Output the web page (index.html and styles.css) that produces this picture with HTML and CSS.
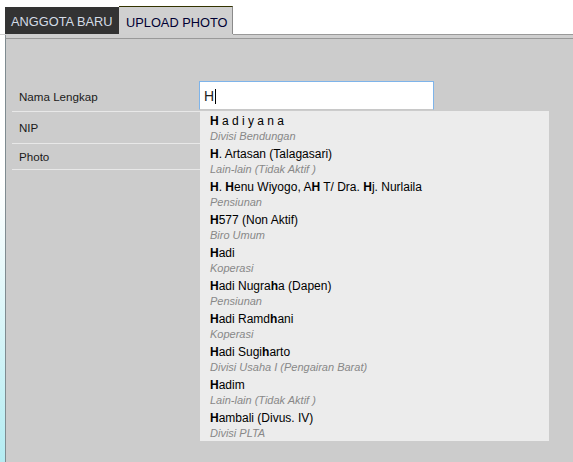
FILE: index.html
```html
<!DOCTYPE html>
<html>
<head>
<meta charset="utf-8">
<link rel="stylesheet" href="styles.css">
</head>
<body>
<div class="app">
  <div class="tabbar">
    <div class="tab tab-dark">ANGGOTA BARU</div>
    <div class="tab tab-active">UPLOAD PHOTO</div>
    <div class="tab-fill"></div>
  </div>
  <div class="band"></div>
  <div class="panel">
    <div class="form">
      <div class="row row-name">
        <div class="label">Nama Lengkap</div>
        <div class="field"><div class="input"><span class="input-text">H</span><span class="caret"></span></div></div>
      </div>
      <div class="row row-nip">
        <div class="label">NIP</div>
      </div>
      <div class="row row-photo">
        <div class="label">Photo</div>
      </div>
    </div>
    <ul class="suggest">
      <li><div class="name"><b>H</b> a d i y a n a</div><div class="desc">Divisi Bendungan</div></li>
      <li><div class="name"><b>H</b>. Artasan (Talagasari)</div><div class="desc">Lain-lain (Tidak Aktif )</div></li>
      <li><div class="name"><b>H</b>. <b>H</b>enu Wiyogo, A<b>H</b> T/ Dra. <b>H</b>j. Nurlaila</div><div class="desc">Pensiunan</div></li>
      <li><div class="name"><b>H</b>577 (Non Aktif)</div><div class="desc">Biro Umum</div></li>
      <li><div class="name"><b>H</b>adi</div><div class="desc">Koperasi</div></li>
      <li><div class="name"><b>H</b>adi Nugra<b>h</b>a (Dapen)</div><div class="desc">Pensiunan</div></li>
      <li><div class="name"><b>H</b>adi Ramd<b>h</b>ani</div><div class="desc">Koperasi</div></li>
      <li><div class="name"><b>H</b>adi Sugi<b>h</b>arto</div><div class="desc">Divisi Usaha I (Pengairan Barat)</div></li>
      <li><div class="name"><b>H</b>adim</div><div class="desc">Lain-lain (Tidak Aktif )</div></li>
      <li><div class="name"><b>H</b>ambali (Divus. IV)</div><div class="desc">Divisi PLTA</div></li>
    </ul>
  </div>
</div>
</body>
</html>
```

FILE: styles.css
```css
html, body {
  margin: 0;
  padding: 0;
  height: 100%;
}
body {
  font-family: "Liberation Sans", Arial, sans-serif;
  background: linear-gradient(to bottom, #ffffff 0, #ffffff 180px, #b4ecf2 462px);
  overflow: hidden;
}
.app {
  display: flex;
  flex-direction: column;
  height: 100%;
}
.tabbar {
  display: flex;
  align-items: flex-start;
  padding-top: 6px;
  height: 29px;
  background: linear-gradient(to bottom, #ffffff 34px, #cfcfcf 34px);
}
.tab {
  box-sizing: border-box;
  height: 28px;
  padding: 6px 0 0;
  line-height: 18px;
  font-size: 12.8px;
  white-space: nowrap;
}
.tab-dark {
  margin-left: 5px;
  margin-top: 1px;
  height: 27px;
  width: 114px;
  padding-left: 6px;
  background: #333333;
  color: #d4dce6;
}
.tab-active {
  width: 114px;
  padding-left: 7px;
  padding-top: 7px;
  background: #d0d0d0;
  border-top: 1px solid #333300;
  border-right: 1px solid #8a8a8a;
  color: #000033;
}
.tab-fill {
  flex: 1;
  align-self: stretch;
  border-bottom: 1px solid #999999;
}
.band {
  height: 3px;
  margin-left: 5px;
  background: #cfcfcf;
  border-left: 1px solid #8a9296;
}
.panel {
  position: relative;
  flex: 1;
  margin-left: 5px;
  background: #cccccc;
  border-top: 1px solid #999999;
  border-left: 1px solid #7f8b90;
}
.form {
  padding: 42px 0 0 6px;
  width: 428px;
}
.row {
  display: flex;
  align-items: center;
  border-bottom: 1px solid #e8e8e8;
}
.row-name { height: 30px; align-items: flex-start; }
.row-nip { height: 31px; }
.row-photo { height: 25px; }
.label {
  width: 187px;
  box-sizing: border-box;
  padding-left: 7px;
  font-size: 11.6px;
  color: #1a1a1a;
}
.row-name .label {
  padding-top: 9px;
}
.field {
  flex: 1;
}
.input {
  box-sizing: border-box;
  height: 29px;
  width: 235px;
  background: #ffffff;
  border: 1px solid #7eb4ea;
  border-bottom-color: #c8c8c8;
  padding: 5px 0 0 4px;
  display: flex;
  align-items: flex-start;
  font-size: 14px;
  line-height: 18px;
  color: #222222;
}
.caret {
  display: inline-block;
  width: 1px;
  height: 15px;
  margin-top: 2px;
  margin-left: 1px;
  background: #000000;
}
.suggest {
  position: absolute;
  left: 194px;
  top: 72px;
  width: 349px;
  margin: 0;
  padding: 0;
  list-style: none;
  background: #ececec;
}
.suggest li {
  height: 33px;
  box-sizing: border-box;
  padding: 2px 10px 1px;
}
.name {
  font-size: 12px;
  line-height: 16px;
  color: #000000;
  white-space: nowrap;
}
.name b {
  font-weight: bold;
}
.desc {
  font-size: 11px;
  line-height: 14px;
  font-style: italic;
  color: #888888;
  white-space: nowrap;
}
```
